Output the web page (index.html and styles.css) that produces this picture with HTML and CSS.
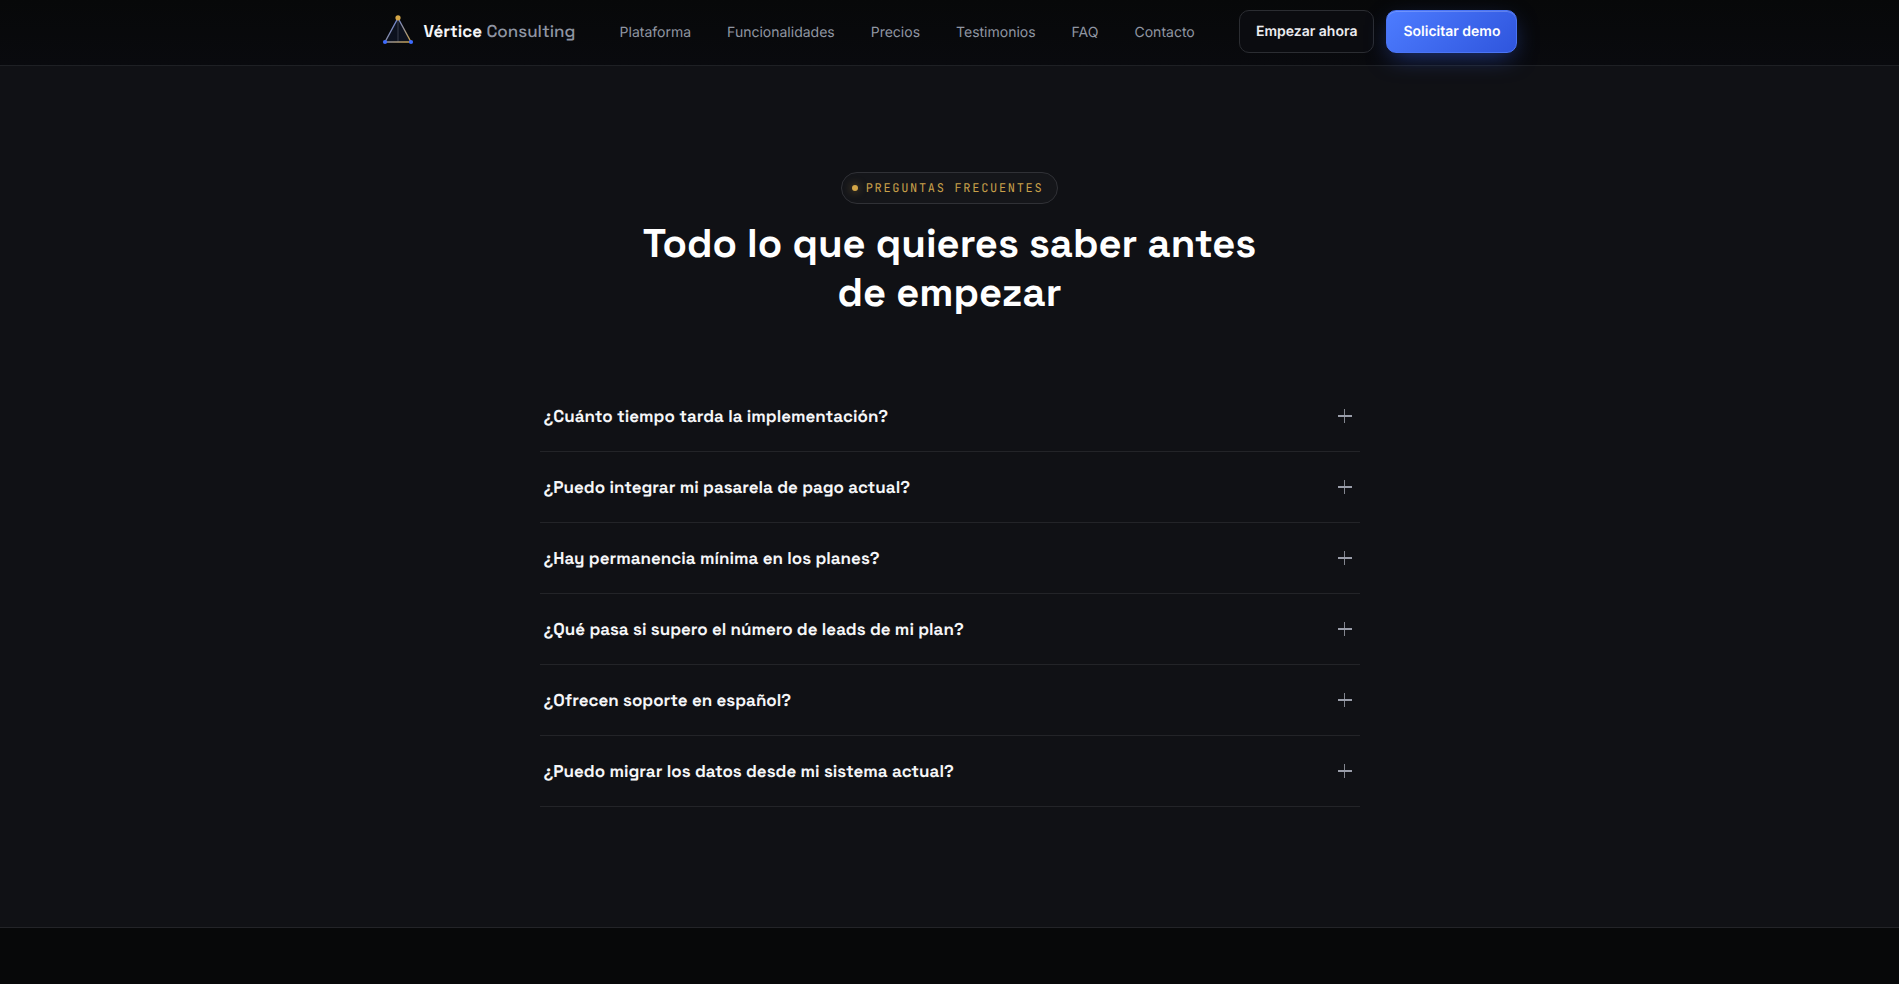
FILE: index.html
```html
<!DOCTYPE html>
<html lang="es">
<head>
<meta charset="utf-8">
<meta name="viewport" content="width=device-width, initial-scale=1">
<title>Vértice Consulting</title>
<link rel="stylesheet" href="styles.css">
</head>
<body>
<header class="header">
  <div class="header-inner">
    <a class="brand" href="#">
      <svg class="brand-mark" viewBox="0 0 32 32" aria-hidden="true">
        <defs>
          <linearGradient id="edge" x1="0" y1="0" x2="1" y2="1">
            <stop offset="0" stop-color="#4f7cff"/>
            <stop offset="1" stop-color="#c9a14a"/>
          </linearGradient>
        </defs>
        <path d="M16 3 29 27H3Z" fill="#4f7cff" fill-opacity=".08" stroke="url(#edge)" stroke-width="1.4" stroke-linejoin="round"/>
        <path d="M16 3V27" stroke="#8a90a0" stroke-opacity=".35"/>
        <circle cx="16" cy="2.8" r="2.6" fill="#d4a647"/>
        <circle cx="3" cy="27" r="2.1" fill="#3d6bff"/>
        <circle cx="29" cy="27" r="2.1" fill="#3d6bff"/>
      </svg>
      <span class="brand-name">Vértice <span class="brand-sub">Consulting</span></span>
    </a>
    <nav class="nav" aria-label="Principal">
      <a href="#plataforma">Plataforma</a>
      <a href="#funcionalidades">Funcionalidades</a>
      <a href="#precios">Precios</a>
      <a href="#testimonios">Testimonios</a>
      <a href="#faq">FAQ</a>
      <a href="#contacto">Contacto</a>
    </nav>
    <div class="actions">
      <button class="btn btn-ghost" type="button">Empezar ahora</button>
      <button class="btn btn-primary" type="button">Solicitar demo</button>
    </div>
  </div>
</header>
<main>
  <section class="faq" id="faq">
    <div class="faq-head">
      <span class="eyebrow"><span class="eyebrow-dot"></span>PREGUNTAS FRECUENTES</span>
      <h2 class="title">Todo lo que quieres saber antes de empezar</h2>
    </div>
    <div class="faq-list">
      <h3 class="item"><button class="question" type="button" aria-expanded="false">¿Cuánto tiempo tarda la implementación?<span class="plus"></span></button></h3>
      <h3 class="item"><button class="question" type="button" aria-expanded="false">¿Puedo integrar mi pasarela de pago actual?<span class="plus"></span></button></h3>
      <h3 class="item"><button class="question" type="button" aria-expanded="false">¿Hay permanencia mínima en los planes?<span class="plus"></span></button></h3>
      <h3 class="item"><button class="question" type="button" aria-expanded="false">¿Qué pasa si supero el número de leads de mi plan?<span class="plus"></span></button></h3>
      <h3 class="item"><button class="question" type="button" aria-expanded="false">¿Ofrecen soporte en español?<span class="plus"></span></button></h3>
      <h3 class="item"><button class="question" type="button" aria-expanded="false">¿Puedo migrar los datos desde mi sistema actual?<span class="plus"></span></button></h3>
    </div>
  </section>
</main>
</body>
</html>
```

FILE: styles.css
```css
* { box-sizing: border-box; }

body {
  margin: 0;
  min-height: 100vh;
  background: #070809;
  color: #f5f6f8;
  font-family: "Space Grotesk", Inter, "Liberation Sans", sans-serif;
  text-rendering: geometricPrecision;
}

a { color: inherit; text-decoration: none; }

button { font: inherit; color: inherit; text-rendering: inherit; cursor: pointer; }

.header {
  position: sticky;
  top: 0;
  z-index: 1;
  background: linear-gradient(#070809, #090a0e);
  border-bottom: 1px solid #1e2024;
}

.header-inner {
  display: flex;
  align-items: center;
  justify-content: space-between;
  max-width: 1200px;
  margin: 0 auto;
  padding: 10px 32px 12px;
}

.brand { display: flex; align-items: center; gap: 10px; padding-bottom: 2px; }

.brand-mark { width: 32px; height: 32px; }

.brand-name { font-size: 17px; font-weight: 700; line-height: 24px; }

.brand-sub { color: #8f95a3; font-weight: 500; }

.nav {
  display: flex;
  gap: 36px;
  padding-top: 2px;
  color: #9096a2;
  font-family: Inter, "Liberation Sans", sans-serif;
  font-size: 14px;
  line-height: 20px;
}

.actions { display: flex; gap: 12px; }

.btn {
  padding: 0 16px;
  border: 1px solid #2b2d32;
  border-radius: 10px;
  font-family: Inter, "Liberation Sans", sans-serif;
  font-size: 14px;
  font-weight: 600;
  line-height: 41px;
}

.btn-ghost { background: #0b0c10; color: #ececf0; }

.btn-primary {
  border-color: #4a74f5;
  background: linear-gradient(135deg, #4d7cff, #2f55dd);
  box-shadow: 0 8px 24px -6px rgba(61, 107, 255, .5), inset 0 1px 0 rgba(255, 255, 255, .2);
  color: #fff;
}

.faq {
  padding: 106px 32px 120px;
  background: #101115;
  border-bottom: 1px solid #232428;
}

.faq-head {
  display: flex;
  flex-direction: column;
  align-items: center;
  gap: 15px;
  max-width: 720px;
  margin: 0 auto 64px;
  text-align: center;
}

.eyebrow {
  display: flex;
  align-items: center;
  gap: 8px;
  padding: 0 14px 0 10px;
  border: 1px solid #303136;
  border-radius: 16px;
  background: #15161a;
  color: #c9a14a;
  font-family: "JetBrains Mono", "DejaVu Sans Mono", monospace;
  font-size: 12px;
  letter-spacing: 0.14em;
  line-height: 30px;
}

.eyebrow-dot {
  width: 6px;
  height: 6px;
  border-radius: 50%;
  background: #d4a647;
  box-shadow: 0 0 8px rgba(212, 166, 71, .6);
}

.title {
  max-width: 640px;
  margin: 0;
  color: #fff;
  font-size: 40px;
  font-weight: 600;
  line-height: 49px;
}

.faq-list { max-width: 820px; margin: 0 auto; }

.item {
  margin: 0;
  border-bottom: 1px solid #232428;
  font-size: 17px;
  font-weight: 600;
  line-height: 24px;
}

.question {
  display: flex;
  align-items: center;
  justify-content: space-between;
  width: 100%;
  padding: 23px 8px 23px 4px;
  border: 0;
  background: none;
  text-align: left;
}

.plus {
  width: 14px;
  height: 14px;
  background:
    linear-gradient(#9a9eaa, #9a9eaa) center / 14px 2px no-repeat,
    linear-gradient(#83868f, #83868f) center / 1px 14px no-repeat;
}
```
